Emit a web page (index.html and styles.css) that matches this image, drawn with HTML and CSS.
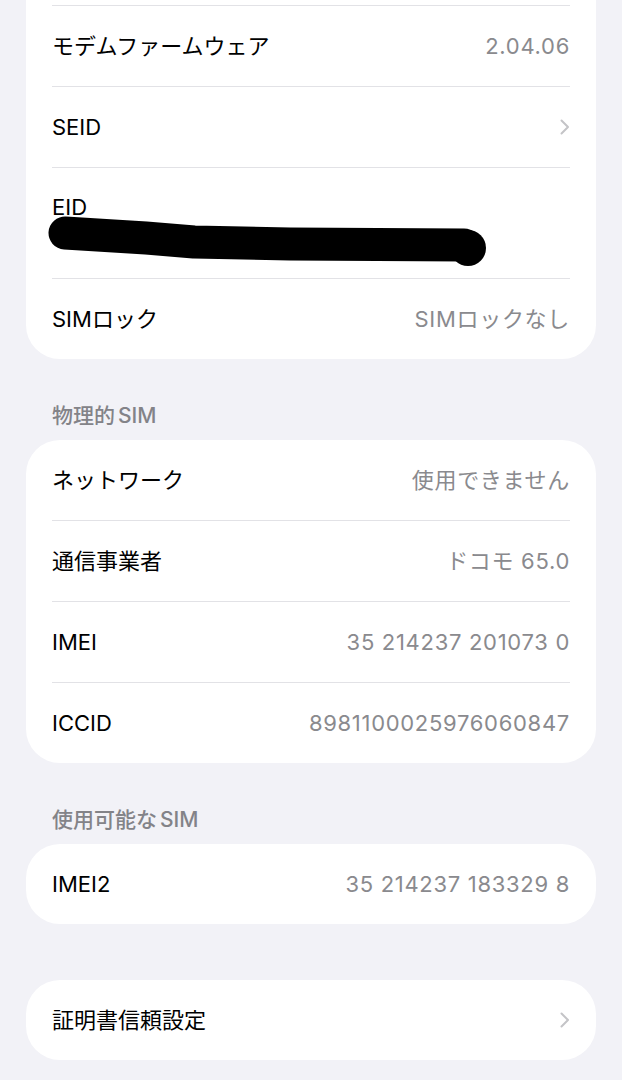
FILE: index.html
```html
<!DOCTYPE html>
<html lang="ja"><head>
<meta charset="utf-8">
<meta name="viewport" content="width=device-width, initial-scale=1.0">
<link rel="stylesheet" href="styles.css">
<title>情報</title>
</head><body>

<div class="card card-cut">
<div class="row"><div class="row-body"><span class="label">モデムファームウェア</span><span class="value">2.04.06</span></div></div>
<div class="row"><div class="row-body"><span class="label">SEID</span>
<svg class="chevron" width="10" height="16" viewBox="0 0 10 16"><path d="M1.5 1.5 L8 8 L1.5 14.5" /></svg></div></div>
<div class="row"><div class="row-body row-stack"><span class="label">EID</span>
<!-- redaction mark over the EID number -->
<svg class="redact" width="446" height="56" viewBox="0 0 446 56"><path d="M21 22 L102 27 L150 31 L246 33 L420 34" /><circle cx="424" cy="37" r="18" /></svg></div></div>
<div class="row"><div class="row-body"><span class="label">SIMロック</span><span class="value">SIMロックなし</span></div></div>
</div>

<h2 class="section-head">物理的<span class="latin">SIM</span></h2>
<div class="card">
<div class="row"><div class="row-body"><span class="label">ネットワーク</span><span class="value">使用できません</span></div></div>
<div class="row"><div class="row-body"><span class="label">通信事業者</span><span class="value">ドコモ 65.0</span></div></div>
<div class="row"><div class="row-body"><span class="label">IMEI</span><span class="value">35 214237 201073 0</span></div></div>
<div class="row"><div class="row-body"><span class="label">ICCID</span><span class="value">8981100025976060847</span></div></div>
</div>

<h2 class="section-head">使用可能な<span class="latin">SIM</span></h2>
<div class="card">
<div class="row"><div class="row-body"><span class="label">IMEI2</span><span class="value">35 214237 183329 8</span></div></div>
</div>

<div class="card card-gap">
<div class="row"><div class="row-body"><span class="label">証明書信頼設定</span>
<svg class="chevron" width="10" height="16" viewBox="0 0 10 16"><path d="M1.5 1.5 L8 8 L1.5 14.5" /></svg></div></div>
</div>

</body></html>
```

FILE: styles.css
```css
body {
	margin : 0 ;
	background : #f2f2f7 ;
	font-family : Inter, "Noto Sans CJK JP", sans-serif ;
	font-size : 22px ;
	color : #000 ;
	}
.card {
	margin : 0 26px ;
	background : #fff ;
	border-radius : 34px ;
	overflow : hidden ;
	}
/* first card is scrolled past its top edge */
.card-cut {
	border-top-left-radius : 0 ;
	border-top-right-radius : 0 ;
	padding-top : 5px ;
	}
.card-cut .row:first-child .row-body {
	border-top : 1px solid #e2e2e6 ;
	}
.card-gap {
	margin-top : 56px ;
	}
.row {
	padding : 0 26px ;
	}
.row-body {
	display : flex ;
	align-items : center ;
	justify-content : space-between ;
	min-height : 80px ;
	}
.row + .row .row-body {
	border-top : 1px solid #e2e2e6 ;
	}
.row-stack {
	flex-direction : column ;
	align-items : flex-start ;
	justify-content : flex-start ;
	min-height : 0 ;
	padding : 26px 0 11px ;
	}
.label {
	line-height : 26px ;
	}
.value {
	line-height : 26px ;
	color : #8a8a8e ;
	letter-spacing : 0.7px ;
	}
.chevron path {
	fill : none ;
	stroke : #c4c4c7 ;
	stroke-width : 2 ;
	stroke-linecap : round ;
	stroke-linejoin : round ;
	}
.redact {
	display : block ;
	margin : -9px 0 0 -8px ;
	}
.redact path {
	fill : none ;
	stroke : #000 ;
	stroke-width : 33 ;
	stroke-linecap : round ;
	stroke-linejoin : round ;
	}
.section-head {
	margin : 45px 0 12px 52px ;
	font-size : 21px ;
	font-weight : 500 ;
	line-height : 24px ;
	color : #838388 ;
	}
.section-head .latin {
	margin-left : 3px ;
	}
```
